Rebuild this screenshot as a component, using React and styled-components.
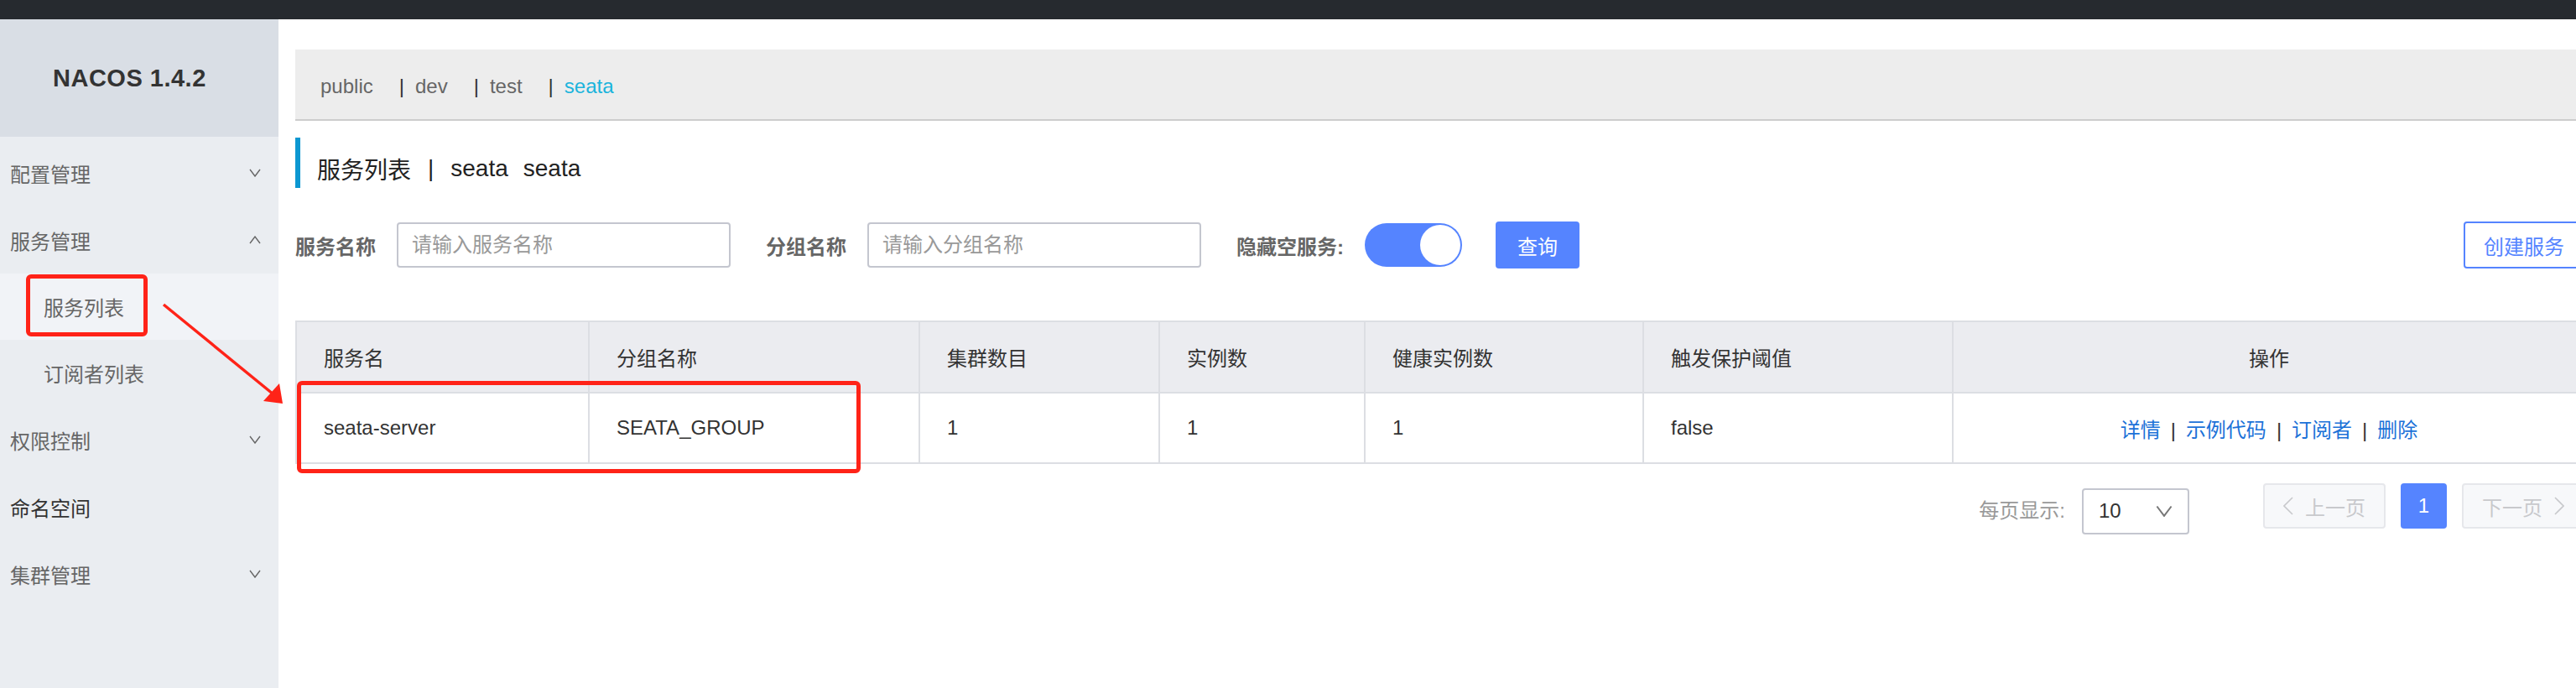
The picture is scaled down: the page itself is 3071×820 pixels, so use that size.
import React from 'react';
import styled, { createGlobalStyle } from 'styled-components';

const GlobalStyle = createGlobalStyle`
  body {
    margin: 0;
    font-family: "Liberation Sans", "Noto Sans CJK SC", sans-serif;
    color: #333;
    background: #fff;
  }
`;

const Chevron = ({ up, size = 14, color = '#666' }) => (
  <svg width={size} height={size * 0.72} viewBox="0 0 14 10" fill="none">
    <polyline
      points={up ? '1,9 7,1 13,9' : '1,1 7,9 13,1'}
      stroke={color}
      strokeWidth="1.4"
    />
  </svg>
);

const Side = ({ left, color = '#c8c9cc' }) => (
  <svg width="12" height="22" viewBox="0 0 12 22" fill="none">
    <polyline points={left ? '11,1 1,11 11,21' : '1,1 11,11 1,21'} stroke={color} strokeWidth="1.6" />
  </svg>
);

const menu = [
  { label: '配置管理', chevron: 'down' },
  { label: '服务管理', chevron: 'up' },
  { label: '服务列表', sub: true, active: true },
  { label: '订阅者列表', sub: true },
  { label: '权限控制', chevron: 'down' },
  { label: '命名空间', dark: true },
  { label: '集群管理', chevron: 'down' },
];

const namespaces = ['public', 'dev', 'test', 'seata'];

const columns = [
  { title: '服务名', width: 349 },
  { title: '分组名称', width: 394 },
  { title: '集群数目', width: 286 },
  { title: '实例数', width: 245 },
  { title: '健康实例数', width: 332 },
  { title: '触发保护阈值', width: 369 },
  { title: '操作', width: 754, center: true },
];

const row = ['seata-server', 'SEATA_GROUP', '1', '1', '1', 'false'];
const actions = ['详情', '示例代码', '订阅者', '删除'];

const App = () => {
  return (
    <Page>
      <GlobalStyle />
      <TopBar />
      <Body>
        <Sidebar>
          <Brand>NACOS 1.4.2</Brand>
          <Menu>
            {menu.map((m) => (
              <MenuItem key={m.label} $sub={m.sub} $active={m.active} $dark={m.dark}>
                <span>{m.label}</span>
                {m.chevron && <Chevron up={m.chevron === 'up'} />}
              </MenuItem>
            ))}
          </Menu>
        </Sidebar>

        <Main>
          <Content>
            <NamespaceBar>
              {namespaces.map((n, i) => (
                <Namespace key={n} $current={n === 'seata'}>
                  {i > 0 && <Pipe>|</Pipe>}
                  {n}
                </Namespace>
              ))}
            </NamespaceBar>

            <PageTitle>
              <span>服务列表</span>
              <TitleDivider>|</TitleDivider>
              <span>seata</span>
              <TitleSecond>seata</TitleSecond>
            </PageTitle>

            <SearchRow>
              <Label>服务名称</Label>
              <Input placeholder="请输入服务名称" />
              <Label>分组名称</Label>
              <Input placeholder="请输入分组名称" />
              <Label>隐藏空服务:</Label>
              <Toggle>
                <Knob />
              </Toggle>
              <PrimaryButton>查询</PrimaryButton>
              <Spacer />
              <OutlineButton>创建服务</OutlineButton>
            </SearchRow>

            <Table>
              <colgroup>
                {columns.map((c) => (
                  <col key={c.title} style={{ width: c.width }} />
                ))}
              </colgroup>
              <thead>
                <tr>
                  {columns.map((c) => (
                    <Th key={c.title} $center={c.center}>
                      {c.title}
                    </Th>
                  ))}
                </tr>
              </thead>
              <tbody>
                <tr>
                  {row.map((v, i) => (
                    <Td key={i}>{v}</Td>
                  ))}
                  <Td $center>
                    {actions.map((a, i) => (
                      <React.Fragment key={a}>
                        {i > 0 && <ActionPipe>|</ActionPipe>}
                        <Action>{a}</Action>
                      </React.Fragment>
                    ))}
                  </Td>
                </tr>
              </tbody>
            </Table>

            <Pagination>
              <PageSizeLabel>每页显示:</PageSizeLabel>
              <PageSize>
                <span>10</span>
                <Chevron size={20} color="#777" />
              </PageSize>
              <PagerButton>
                <Side left />
                <span>上一页</span>
              </PagerButton>
              <PageNumber>1</PageNumber>
              <PagerButton>
                <span>下一页</span>
                <Side />
              </PagerButton>
            </Pagination>
          </Content>
        </Main>
      </Body>

      <Highlight $x={31} $y={327} $w={145} $h={74} />
      <Highlight $x={354} $y={454} $w={672} $h={110} />
      <ArrowLayer width="360" height="500" viewBox="0 0 360 500">
        <line x1="195" y1="363" x2="326" y2="470" stroke="#ff2318" strokeWidth="3.5" />
        <polygon points="337,481 314,478 333,457" fill="#ff2318" />
      </ArrowLayer>
    </Page>
  );
};

const Page = styled.div`
  position: relative;
  width: 3071px;
  height: 820px;
  overflow: hidden;
  display: flex;
  flex-direction: column;
`;

const TopBar = styled.div`
  height: 23px;
  flex-shrink: 0;
  background: #262a2f;
`;

const Body = styled.div`
  flex: 1;
  display: flex;
  min-height: 0;
`;

const Sidebar = styled.aside`
  width: 332px;
  flex-shrink: 0;
  background: #eaedf1;
  display: flex;
  flex-direction: column;
`;

const Brand = styled.div`
  height: 140px;
  display: flex;
  align-items: center;
  padding-left: 63px;
  background: #d9dee5;
  font-weight: bold;
  font-size: 29px;
  letter-spacing: 0.5px;
  color: #333;
`;

const Menu = styled.ul`
  list-style: none;
  margin: 0;
  padding: 3px 0 0;
`;

const MenuItem = styled.li`
  height: ${(p) => (p.$sub ? 79 : 80)}px;
  display: flex;
  align-items: center;
  justify-content: space-between;
  padding: 0 21px 0 ${(p) => (p.$sub ? 52 : 12)}px;
  font-size: 24px;
  color: ${(p) => (p.$dark ? '#333' : '#666')};
  background: ${(p) => (p.$active ? '#f1f3f7' : 'transparent')};
`;

const Main = styled.main`
  flex: 1;
  padding-left: 20px;
  overflow: hidden;
`;

const Content = styled.div`
  width: 2729px;
  padding-top: 36px;
`;

const NamespaceBar = styled.div`
  box-sizing: border-box;
  height: 85px;
  display: flex;
  align-items: center;
  padding: 5px 0 0 30px;
  background: #ededed;
  border-bottom: 2px solid #cdcdcd;
  font-size: 24px;
`;

const Namespace = styled.span`
  margin-right: 31px;
  color: ${(p) => (p.$current ? '#1bb4dc' : '#666')};
`;

const Pipe = styled.span`
  color: #333;
  margin-right: 13px;
`;

const PageTitle = styled.h1`
  box-sizing: border-box;
  margin: 20px 0 0;
  height: 60px;
  display: flex;
  align-items: center;
  padding: 14px 0 0 20px;
  border-left: 6px solid #0c97d1;
  font-size: 28px;
  font-weight: normal;
  color: #222;
`;

const TitleDivider = styled.span`
  margin: 0 20px;
`;

const TitleSecond = styled.span`
  margin-left: 18px;
`;

const SearchRow = styled.div`
  margin-top: 40px;
  height: 56px;
  display: flex;
  align-items: center;
`;

const Label = styled.span`
  font-size: 24px;
  font-weight: bold;
  color: #666;
  margin-right: 25px;
`;

const Input = styled.input`
  box-sizing: border-box;
  width: 398px;
  height: 54px;
  margin-right: 42px;
  padding: 0 16px;
  border: 2px solid #c4c6cf;
  border-radius: 4px;
  font-family: inherit;
  font-size: 24px;
  outline: none;
  &::placeholder {
    color: #999;
  }
`;

const Toggle = styled.span`
  box-sizing: border-box;
  width: 116px;
  height: 52px;
  margin-right: 40px;
  display: flex;
  justify-content: flex-end;
  align-items: center;
  padding: 2px;
  border-radius: 26px;
  background: #5584ff;
`;

const Knob = styled.span`
  width: 48px;
  height: 48px;
  border-radius: 50%;
  background: #fff;
`;

const PrimaryButton = styled.button`
  width: 100px;
  height: 56px;
  border: none;
  border-radius: 4px;
  background: #5584ff;
  color: #fff;
  font-family: inherit;
  font-size: 24px;
`;

const Spacer = styled.div`
  flex: 1;
`;

const OutlineButton = styled.button`
  width: 144px;
  height: 56px;
  border: 2px solid #5584ff;
  border-radius: 4px;
  background: #fff;
  color: #5584ff;
  font-family: inherit;
  font-size: 24px;
`;

const Table = styled.table`
  margin-top: 62px;
  width: 2729px;
  table-layout: fixed;
  border-collapse: collapse;
  font-size: 24px;
  color: #333;
`;

const Th = styled.th`
  height: 83px;
  padding: 0 32px;
  text-align: ${(p) => (p.$center ? 'center' : 'left')};
  font-weight: normal;
  background: #ebecf0;
  border: 2px solid #dcdee3;
`;

const Td = styled.td`
  height: 82px;
  padding: 0 32px;
  text-align: ${(p) => (p.$center ? 'center' : 'left')};
  border: 2px solid #dcdee3;
`;

const Action = styled.a`
  color: #1c72d8;
`;

const ActionPipe = styled.span`
  margin: 0 12px;
  color: #333;
`;

const Pagination = styled.div`
  margin-top: 22px;
  display: flex;
  justify-content: flex-end;
  align-items: center;
  height: 56px;
`;

const PageSizeLabel = styled.span`
  font-size: 24px;
  color: #999;
  margin-right: 20px;
  margin-top: 6px;
`;

const PageSize = styled.div`
  box-sizing: border-box;
  width: 128px;
  height: 55px;
  margin-top: 12px;
  margin-right: 88px;
  padding: 0 18px 0 18px;
  display: flex;
  align-items: center;
  justify-content: space-between;
  border: 2px solid #c4c6cf;
  border-radius: 4px;
  font-size: 24px;
  color: #333;
`;

const PagerButton = styled.div`
  box-sizing: border-box;
  width: 146px;
  height: 54px;
  display: flex;
  align-items: center;
  justify-content: center;
  gap: 14px;
  border: 2px solid #e6e7eb;
  border-radius: 4px;
  background: #f7f8fa;
  color: #c8c9cc;
  font-size: 24px;
`;

const PageNumber = styled.div`
  width: 55px;
  height: 54px;
  margin: 0 18px;
  display: flex;
  align-items: center;
  justify-content: center;
  border-radius: 4px;
  background: #5584ff;
  color: #fff;
  font-size: 24px;
`;

const Highlight = styled.div`
  position: absolute;
  left: ${(p) => p.$x}px;
  top: ${(p) => p.$y}px;
  width: ${(p) => p.$w}px;
  height: ${(p) => p.$h}px;
  box-sizing: border-box;
  border: 5px solid #ff2318;
  border-radius: 6px;
  pointer-events: none;
`;

const ArrowLayer = styled.svg`
  position: absolute;
  left: 0;
  top: 0;
  pointer-events: none;
`;

export default App;
